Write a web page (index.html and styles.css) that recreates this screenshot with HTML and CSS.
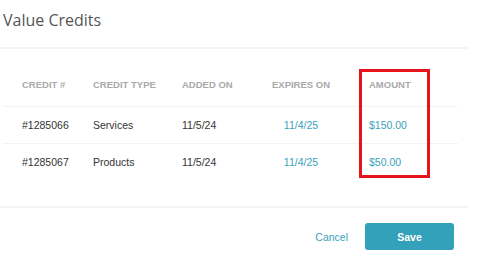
FILE: index.html
```html
<!DOCTYPE html>
<html lang="en">
<head>
  <meta charset="UTF-8">
  <meta name="viewport" content="width=device-width, initial-scale=1.0">
  <title>Value Credits</title>
  <link rel="stylesheet" href="styles.css">
</head>
<body>

<div class="modal">
  <div class="modal-header">
    <h2 class="modal-title">Value Credits</h2>
  </div>

  <div class="modal-body">
    <table class="credits-table">
      <thead>
        <tr>
          <th class="col-id">Credit #</th>
          <th class="col-type">Credit Type</th>
          <th class="col-added">Added On</th>
          <th class="col-expires">Expires On</th>
          <th class="col-amount">Amount</th>
        </tr>
      </thead>
      <tbody>
        <tr>
          <td>#1285066</td>
          <td>Services</td>
          <td>11/5/24</td>
          <td class="col-expires link">11/4/25</td>
          <td class="link">$150.00</td>
        </tr>
        <tr>
          <td>#1285067</td>
          <td>Products</td>
          <td>11/5/24</td>
          <td class="col-expires link">11/4/25</td>
          <td class="link">$50.00</td>
        </tr>
      </tbody>
    </table>
    <div class="highlight"></div>
  </div>

  <div class="modal-footer">
    <button class="btn-cancel">Cancel</button>
    <button class="btn-save">Save</button>
  </div>
</div>

</body>
</html>
```

FILE: styles.css
```css
body {
  margin: 0;
  background: #fff;
  font-family: "Liberation Sans", Arial, sans-serif;
}

.modal {
  width: 468px;
}

.modal-header {
  height: 49px;
  padding-left: 3px;
  border-bottom: 2px solid #f3f3f3;
  box-sizing: border-box;
}

.modal-title {
  margin: 0;
  padding-top: 9px;
  font-family: "Open Sans", sans-serif;
  font-size: 16px;
  font-weight: 400;
  line-height: 22px;
  color: #555;
}

.modal-body {
  position: relative;
  padding: 0 10px 27px 3px;
  border-bottom: 2px solid #f3f3f3;
}

.credits-table {
  width: 455px;
  border-collapse: collapse;
  table-layout: fixed;
}

.credits-table th {
  padding: 30px 0 15px 19px;
  text-align: left;
  font-size: 9.5px;
  font-weight: bold;
  line-height: 12px;
  text-transform: uppercase;
  color: #a9a9a9;
  border-bottom: 1px solid #f3f3f3;
}

.credits-table td {
  height: 35px;
  padding: 0 0 0 19px;
  font-size: 10.5px;
  color: #333;
  vertical-align: middle;
}

.credits-table tbody tr:first-child td {
  height: 36px;
  border-bottom: 1px solid #f3f3f3;
}

.col-id { width: 52px; }
.col-type { width: 70px; }
.col-added { width: 70px; }
.col-expires { width: 98px; }

.credits-table .col-expires {
  padding-left: 0;
  text-align: center;
}

.credits-table .link {
  color: #3aa2bd;
}

.highlight {
  position: absolute;
  left: 359px;
  top: 20px;
  width: 65px;
  height: 103px;
  border: 3px solid #e8141c;
}

.modal-footer {
  display: flex;
  justify-content: flex-end;
  align-items: center;
  gap: 17px;
  padding: 15px 14px 0 0;
}

.btn-cancel {
  border: none;
  background: none;
  padding: 0;
  font-family: inherit;
  font-size: 10.5px;
  color: #3aa2bd;
  cursor: pointer;
}

.btn-save {
  width: 89px;
  height: 27px;
  border: none;
  border-radius: 3px;
  background: #33a1b9;
  color: #fff;
  font-family: inherit;
  font-size: 10.5px;
  font-weight: bold;
  cursor: pointer;
}
```
